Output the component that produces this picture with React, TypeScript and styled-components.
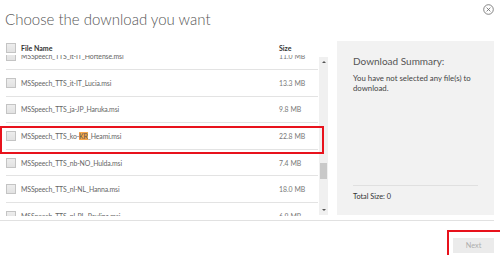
import styled, { createGlobalStyle } from 'styled-components';

const GlobalStyle = createGlobalStyle`
  html, body { margin: 0; padding: 0; background: #fff; }
  body { font-family: Lato, "Open Sans", sans-serif; color: #555; }
`;

const ROW_H = 26.6;
const SCROLL_OFFSET = 11.6;

type FileItem = { name: string; size: string; highlight?: [string, string, string] };

const files: FileItem[] = [
  { name: 'MSSpeech_TTS_it-IT_Hortense.msi', size: '11.0 MB' },
  { name: 'MSSpeech_TTS_it-IT_Lucia.msi', size: '13.3 MB' },
  { name: 'MSSpeech_TTS_ja-JP_Haruka.msi', size: '9.8 MB' },
  { name: '', size: '22.8 MB', highlight: ['MSSpeech_TTS_ko-', 'KR', '_Heami.msi'] },
  { name: 'MSSpeech_TTS_nb-NO_Hulda.msi', size: '7.4 MB' },
  { name: 'MSSpeech_TTS_nl-NL_Hanna.msi', size: '18.0 MB' },
  { name: 'MSSpeech_TTS_pl-PL_Paulina.msi', size: '6.9 MB' },
];

const Page = styled.div`
  width: 494px;
  height: 255px;
  padding-right: 6px;
  display: flex;
  flex-direction: column;
  overflow: hidden;
`;

const TitleBar = styled.div`
  height: 41px;
  display: flex;
  justify-content: space-between;
  align-items: flex-start;
`;

const Title = styled.h1`
  margin: 9px 0 0 5px;
  font-size: 15px;
  font-weight: 300;
  color: #555;
  line-height: 21px;
  transform: scaleY(1.1);
  transform-origin: left bottom;
`;

const CloseButton = styled.div`
  width: 11px;
  height: 11px;
  margin-top: -1px;
  color: #666;
`;

const Body = styled.div`
  display: flex;
  gap: 9px;
  height: 179px;
  border-bottom: 1px solid #e1e1e1;
`;

const ListPanel = styled.div`
  width: 328px;
  flex: none;
  display: flex;
  flex-direction: column;
`;

const ListHeader = styled.div`
  height: 14px;
  display: flex;
  align-items: center;
  padding-left: 6px;
  padding-right: 10px;
  font-size: 7px;
  font-weight: 700;
  color: #333;
`;

const HeadName = styled.span`
  flex: 1;
  margin-left: 5px;
`;

const HeadSize = styled.span`
  width: 39px;
`;

const ListArea = styled.div`
  position: relative;
  display: flex;
  height: 161px;
`;

const Viewport = styled.div`
  flex: 1;
  overflow: hidden;
`;

const Rows = styled.div`
  margin-top: -${SCROLL_OFFSET}px;
`;

const Row = styled.div`
  height: ${ROW_H}px;
  box-sizing: border-box;
  display: flex;
  align-items: center;
  margin-left: 6px;
  border-bottom: 1px solid #e3e3e3;
  font-size: 6.9px;
  letter-spacing: -0.12px;
  color: #666;
`;

const Checkbox = styled.span`
  width: 8px;
  height: 8px;
  flex: none;
  border: 1px solid #c4c4c4;
  background: linear-gradient(#ededed, #e2e2e2);
`;

const FileName = styled.span`
  flex: 1;
  margin-left: 5px;
  white-space: nowrap;
`;

const Mark = styled.span`
  background: #f6a84a;
  color: #555;
`;

const FileSize = styled.span`
  width: 39px;
  color: #777;
  letter-spacing: 0;
`;

const Scrollbar = styled.div`
  width: 9px;
  margin: 2px 0 1px 1px;
  background: #f0f0f0;
  display: flex;
  flex-direction: column;
  justify-content: space-between;
  align-items: center;
`;

const Arrow = styled.div<{ $down?: boolean }>`
  width: 0;
  height: 0;
  margin: 4px 0;
  border-left: 2px solid transparent;
  border-right: 2px solid transparent;
  ${(p) => (p.$down ? 'border-top: 2px solid #555;' : 'border-bottom: 2px solid #555;')}
`;

const Thumb = styled.div`
  position: absolute;
  top: 108px;
  right: 1px;
  width: 7px;
  height: 16px;
  background: #c9c9c9;
`;

const RedBox = styled.div`
  position: absolute;
  left: 0;
  top: 71px;
  width: 320px;
  height: 24px;
  border: 2px solid #e8121c;
  pointer-events: none;
`;

const Summary = styled.div`
  flex: 1;
  height: 160px;
  padding: 14px 0 0 16px;
  background: #f2f2f2;
  display: flex;
  flex-direction: column;
`;

const SummaryTitle = styled.div`
  font-size: 10px;
  color: #555;
  line-height: 13px;
`;

const SummaryText = styled.div`
  margin: 6px 4px 0 0;
  font-size: 7.8px;
  line-height: 9.5px;
  color: #444;
`;

const SummaryFooter = styled.div`
  margin-top: auto;
  margin-right: 16px;
  border-top: 1px solid #e0e0e0;
  height: 30px;
  padding-top: 6px;
  box-sizing: border-box;
  font-size: 7.3px;
  color: #333;
`;

const Footer = styled.div`
  flex: 1;
  position: relative;
  display: flex;
  justify-content: flex-end;
  align-items: flex-start;
  padding-top: 17px;
`;

const NextButton = styled.button`
  width: 41px;
  height: 15px;
  padding: 0;
  border: none;
  background: #ebebeb;
  color: #aeaeae;
  font-family: inherit;
  font-size: 7.3px;
`;

const FooterMark = styled.div`
  position: absolute;
  left: 447px;
  top: 9px;
  width: 60px;
  height: 40px;
  border: 2px solid #e8121c;
`;

export default function App() {
  return (
    <Page>
      <GlobalStyle />
      <TitleBar>
        <Title>Choose the download you want</Title>
        <CloseButton>
          <svg width="11" height="11" viewBox="0 0 11 11" fill="none" stroke="currentColor" strokeWidth="0.8">
            <circle cx="5.5" cy="5.5" r="4.8" />
            <path d="M3.6 3.6 L7.4 7.4 M7.4 3.6 L3.6 7.4" />
          </svg>
        </CloseButton>
      </TitleBar>
      <Body>
        <ListPanel>
          <ListHeader>
            <Checkbox />
            <HeadName>File Name</HeadName>
            <HeadSize>Size</HeadSize>
          </ListHeader>
          <ListArea>
            <Viewport>
              <Rows>
                {files.map((f, i) => (
                  <Row key={i}>
                    <Checkbox />
                    <FileName>
                      {f.highlight ? (
                        <>
                          {f.highlight[0]}
                          <Mark>{f.highlight[1]}</Mark>
                          {f.highlight[2]}
                        </>
                      ) : (
                        f.name
                      )}
                    </FileName>
                    <FileSize>{f.size}</FileSize>
                  </Row>
                ))}
              </Rows>
            </Viewport>
            <Scrollbar>
              <Arrow />
              <Arrow $down />
            </Scrollbar>
            <Thumb />
            <RedBox />
          </ListArea>
        </ListPanel>
        <Summary>
          <SummaryTitle>Download Summary:</SummaryTitle>
          <SummaryText>You have not selected any file(s) to download.</SummaryText>
          <SummaryFooter>Total Size: 0</SummaryFooter>
        </Summary>
      </Body>
      <Footer>
        <NextButton>Next</NextButton>
        <FooterMark />
      </Footer>
    </Page>
  );
}
